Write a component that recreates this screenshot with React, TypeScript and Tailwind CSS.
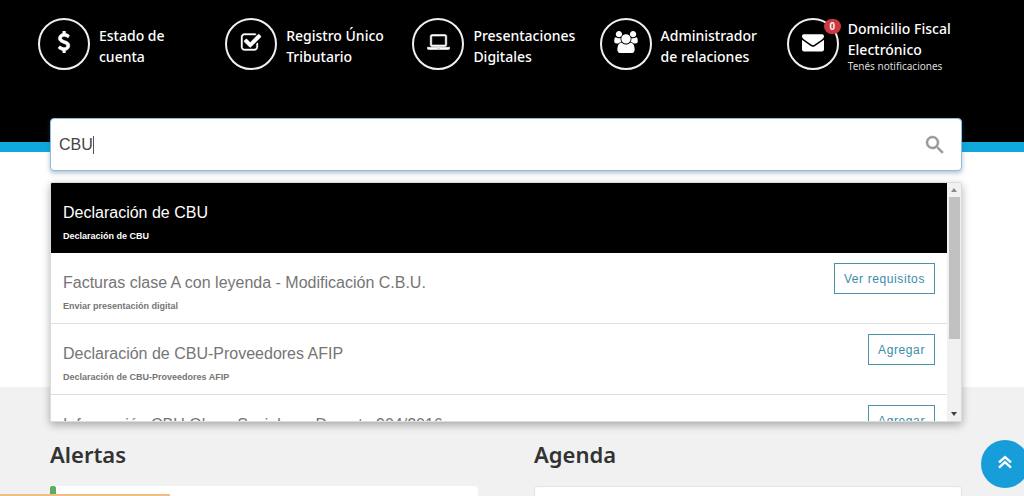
import { useState, type ReactNode } from "react";

type IconProps = { viewBox: string; d: string; className: string };

function Glyph({ viewBox, d, className }: IconProps) {
  return (
    <svg viewBox={viewBox} className={className} fill="currentColor" stroke="currentColor" aria-hidden="true">
      <path d={d} />
    </svg>
  );
}

const SEARCH =
  "M15.5 14h-.79l-.28-.27A6.471 6.471 0 0 0 16 9.5 6.5 6.5 0 1 0 9.5 16c1.61 0 3.09-.59 4.23-1.57l.27.28v.79l5 4.99L20.49 19l-4.99-5zm-6 0C7.01 14 5 11.99 5 9.5S7.01 5 9.5 5 14 7.01 14 9.5 11.99 14 9.5 14z";
const DOLLAR =
  "M1362 1185q0 153-99.5 263.5t-258.5 136.5v175q0 14-9 23t-23 9h-135q-13 0-22.5-9.5t-9.5-22.5v-175q-66-9-127.5-31t-101.5-44.5-74-48-46.5-37.5-17.5-18q-17-21-2-41l103-135q7-10 23-12 15-2 24 9l2 2q113 99 243 125 37 8 74 8 81 0 142.5-43t61.5-122q0-28-15-53t-33.5-42-58.5-37.5-66-32-80-32.5q-39-16-61.5-25t-61.5-26.5-62.5-31-56.5-35.5-53.5-42.5-43.5-49-35.5-58-21-66.5-8.5-78q0-138 98-242t255-134v-180q0-13 9.5-22.5t22.5-9.5h135q14 0 23 9t9 23v176q57 6 110.5 23t87 33.5 63.5 37.5 39 29 15 14q17 18 5 38l-81 146q-8 15-23 16-14 3-27-7-3-3-14.5-12t-39-26.5-58.5-32-74.5-26-85.5-11.5q-95 0-155 43t-60 111q0 26 8.5 48t29.5 41.5 39.5 33 56 31 60.5 27 70 27.5q53 20 81 31.5t76 35 75.5 42.5 62 50 53 63.5 31.5 76.5 13 94z";
const CHECK =
  "M1472 930v318q0 119-84.5 203.5t-203.5 84.5h-832q-119 0-203.5-84.5t-84.5-203.5v-832q0-119 84.5-203.5t203.5-84.5h832q63 0 117 25 15 7 18 23 3 17-9 29l-49 49q-10 10-23 10-3 0-9-2-23-6-45-6h-832q-66 0-113 47t-47 113v832q0 66 47 113t113 47h832q66 0 113-47t47-113v-254q0-13 9-22l64-64q10-10 23-10 6 0 12 3 20 8 20 29zm231-489l-814 814q-24 24-57 24t-57-24l-430-430q-24-24-24-57t24-57l110-110q24-24 57-24t57 24l263 263 647-647q24-24 57-24t57 24l110 110q24 24 24 57t-24 57z";
const LAPTOP =
  "M416 1152q-66 0-113-47t-47-113v-704q0-66 47-113t113-47h1088q66 0 113 47t47 113v704q0 66-47 113t-113 47h-1088zm-32-864v704q0 13 9.5 22.5t22.5 9.5h1088q13 0 22.5-9.5t9.5-22.5v-704q0-13-9.5-22.5t-22.5-9.5h-1088q-13 0-22.5 9.5t-9.5 22.5zm1376 928h160v96q0 40-47 68t-113 28h-1600q-66 0-113-28t-47-68v-96h1760zm-720 96q16 0 16-16t-16-16h-160q-16 0-16 16t16 16h160z";
const USERS =
  "M593 896q-162 5-265 128h-134q-82 0-138-40.5t-56-118.5q0-353 124-353 6 0 43.5 21t97.5 42.5 119 21.5q67 0 133-23-5 37-5 66 0 139 81 256zm1071 637q0 120-73 189.5t-194 69.5h-874q-121 0-194-69.5t-73-189.5q0-53 3.5-103.5t14-109 26.5-108.5 43-97.5 62-81 85.5-53.5 111.5-20q10 0 43 21.5t73 48 107 48 135 21.5 135-21.5 107-48 73-48 43-21.5q61 0 111.5 20t85.5 53.5 62 81 43 97.5 26.5 108.5 14 109 3.5 103.5zm-1024-1277q0 106-75 181t-181 75-181-75-75-181 75-181 181-75 181 75 75 181zm704 384q0 159-112.5 271.5t-271.5 112.5-271.5-112.5-112.5-271.5 112.5-271.5 271.5-112.5 271.5 112.5 112.5 271.5zm576 225q0 78-56 118.5t-138 40.5h-134q-103-123-265-128 81-117 81-256 0-29-5-66 66 23 133 23 59 0 119-21.5t97.5-42.5 43.5-21q124 0 124 353zm-128-609q0 106-75 181t-181 75-181-75-75-181 75-181 181-75 181 75 75 181z";
const ENVELOPE =
  "M1792 710v794q0 66-47 113t-113 47h-1472q-66 0-113-47t-47-113v-794q44 49 101 87 362 246 497 345 57 42 92.5 65.5t94.5 48 110 24.5h2q51 0 110-24.5t94.5-48 92.5-65.5q170-123 498-345 57-39 100-87zm0-294q0 79-49 151t-122 123q-376 261-468 325-10 7-42.5 31t-54 38.5-52 32.5-57.5 27-50 9h-2q-23 0-50-9t-57.5-27-52-32.5-54-38.5-42.5-31q-91-64-262-182.5t-205-142.5q-62-42-117-115.5t-55-136.5q0-78 41.5-130t118.5-52h1472q65 0 112.5 47t47.5 113z";

type Shortcut = { lines: [string, string]; note?: string; badge?: string; icon: ReactNode };

const shortcuts: Shortcut[] = [
  { lines: ["Estado de", "cuenta"], icon: <Glyph viewBox="0 0 1792 1792" d={DOLLAR} className="size-[22px] stroke-[60]" /> },
  { lines: ["Registro Único", "Tributario"], icon: <Glyph viewBox="0 0 1792 1664" d={CHECK} className="h-[20px] w-[22px] stroke-[30]" /> },
  { lines: ["Presentaciones", "Digitales"], icon: <Glyph viewBox="0 0 1920 1536" d={LAPTOP} className="h-[18px] w-[23px] stroke-[50]" /> },
  { lines: ["Administrador", "de relaciones"], icon: <Glyph viewBox="0 0 1920 1792" d={USERS} className="h-[22px] w-[24px] stroke-0" /> },
  {
    lines: ["Domicilio Fiscal", "Electrónico"],
    note: "Tenés notificaciones",
    badge: "0",
    icon: <Glyph viewBox="0 0 1792 1792" d={ENVELOPE} className="size-[22px] stroke-0" />,
  },
];

const results = [
  { title: "Declaración de CBU", detail: "Declaración de CBU", action: "", active: true },
  { title: "Facturas clase A con leyenda - Modificación C.B.U.", detail: "Enviar presentación digital", action: "Ver requisitos", active: false },
  { title: "Declaración de CBU-Proveedores AFIP", detail: "Declaración de CBU-Proveedores AFIP", action: "Agregar", active: false },
  { title: "Información CBU Obras Sociales – Decreto 904/2016", detail: "", action: "Agregar", active: false },
];

function ShortcutLink({ item }: { item: Shortcut }) {
  return (
    <a href="#" className="flex h-13 items-center gap-[9px] text-white">
      <span className="relative flex size-13 shrink-0 items-center justify-center rounded-full border-2 border-[#f0f0f0] pb-1">
        {item.icon}
        {item.badge && (
          <span className="absolute -top-px -right-1 flex h-[15px] w-[17px] items-center justify-center rounded-full bg-[#c9393f] font-['Liberation_Sans'] text-[10px] font-bold">
            {item.badge}
          </span>
        )}
      </span>
      <span
        className={
          item.note
            ? "self-start text-sm leading-[21px] font-medium whitespace-nowrap"
            : "pt-1 text-sm leading-[21px] font-medium whitespace-nowrap"
        }
      >
        {item.lines[0]}
        <br />
        {item.lines[1]}
        {item.note && <small className="block text-[10px] leading-3 font-normal text-[#dcdcdc]">{item.note}</small>}
      </span>
    </a>
  );
}

function Scrollbar() {
  return (
    <div className="flex w-[14px] shrink-0 flex-col items-center bg-[#f1f1f1]" aria-hidden="true">
      <div className="flex h-[14px] items-center">
        <svg viewBox="0 0 6 4" className="h-1 w-1.5 fill-[#8a8a8a]"><path d="M3 0 6 4H0z" /></svg>
      </div>
      <div className="h-[142px] w-[11px] bg-[#c1c1c1]" />
      <div className="mt-auto flex h-[14px] items-center">
        <svg viewBox="0 0 6 4" className="h-1 w-1.5 fill-[#404040]"><path d="M3 4 0 0h6z" /></svg>
      </div>
    </div>
  );
}

export default function App() {
  const [query, setQuery] = useState("CBU");

  return (
    <div className="relative h-screen overflow-hidden bg-white font-['Noto_Sans',sans-serif]">
      <header className="h-[152px] border-b-10 border-[#10a8dc] bg-black pt-[18px] pl-[38px]">
        <nav className="grid max-w-[936px] grid-cols-5">
          {shortcuts.map((item) => (
            <ShortcutLink key={item.lines[0]} item={item} />
          ))}
        </nav>
      </header>

      <main className="pt-[235px]">
        <section className="grid h-[300px] grid-cols-2 gap-14 bg-[#f1f1f1] pt-[51px] pr-[62px] pl-[50px]">
          <div>
            <h2 className="text-[22px] leading-8 font-semibold text-[#333]">Alertas</h2>
            <div className="mt-4 flex h-40 rounded bg-white">
              <span className="w-1.5 rounded-t-xs bg-[#5cae5f]" />
            </div>
          </div>
          <div>
            <h2 className="text-[22px] leading-8 font-semibold text-[#333]">Agenda</h2>
            <div className="mt-4 h-40 rounded border border-[#e4e4e4] bg-white" />
          </div>
        </section>
      </main>

      <div className="absolute top-[118px] right-[62px] left-[50px] font-['Liberation_Sans',Arial,sans-serif]">
        <form role="search" className="flex h-[53px] items-center rounded border border-[#8fbad9] bg-white pr-[14px] pl-2 shadow-[0_2px_5px_rgba(50,90,130,0.4)]" onSubmit={(e) => e.preventDefault()}>
          <span className="relative flex grow items-center">
            <input
              type="text"
              aria-label="Buscar"
              value={query}
              onChange={(e) => setQuery(e.target.value)}
              className="w-full text-base text-[#444] outline-none"
            />
            {query === "CBU" && <span className="absolute left-[34px] h-[18px] w-px bg-[#555]" />}
          </span>
          <button type="submit" aria-label="Buscar" className="text-[#999]">
            <Glyph viewBox="0 0 24 24" d={SEARCH} className="size-6 stroke-[0.5]" />
          </button>
        </form>

        <div className="mt-[11px] flex h-[240px] overflow-hidden rounded-xs border border-[#dcdcdc] bg-white shadow-[0_3px_8px_rgba(0,0,0,0.3)]">
          <ul className="min-w-0 grow">
            {results.map((r) => (
              <li
                key={r.title}
                className={
                  r.active
                    ? "flex h-[70px] justify-between bg-black pr-3 pl-3 text-white"
                    : "flex h-[71px] justify-between border-b border-[#dedede] bg-white pr-3 pl-3 text-[#757575]"
                }
              >
                <div className="pt-[18px]">
                  <p className="text-base leading-6">{r.title}</p>
                  {r.detail && <p className="mt-[5px] text-[9px] leading-3 font-bold">{r.detail}</p>}
                </div>
                {r.action && (
                  <button type="button" className="mt-[10px] h-[31px] border border-[#4a93ab] px-[9px] text-xs tracking-wider text-[#3a8ba8]">
                    {r.action}
                  </button>
                )}
              </li>
            ))}
          </ul>
          <Scrollbar />
        </div>
      </div>

      <div className="absolute bottom-0 left-0 h-0.5 w-[170px] bg-[#f0bd86]" />
      <button type="button" aria-label="Volver arriba" className="absolute -right-[5px] bottom-2 flex size-12 items-center justify-center rounded-full bg-[#189ddb] pb-1 text-white">
        <svg viewBox="0 0 14 14" className="size-[14px] fill-none stroke-white stroke-[2.4]" aria-hidden="true">
          <path d="M1 7.4 7 2l6 5.4M1 12.6 7 7.2l6 5.4" />
        </svg>
      </button>
    </div>
  );
}
